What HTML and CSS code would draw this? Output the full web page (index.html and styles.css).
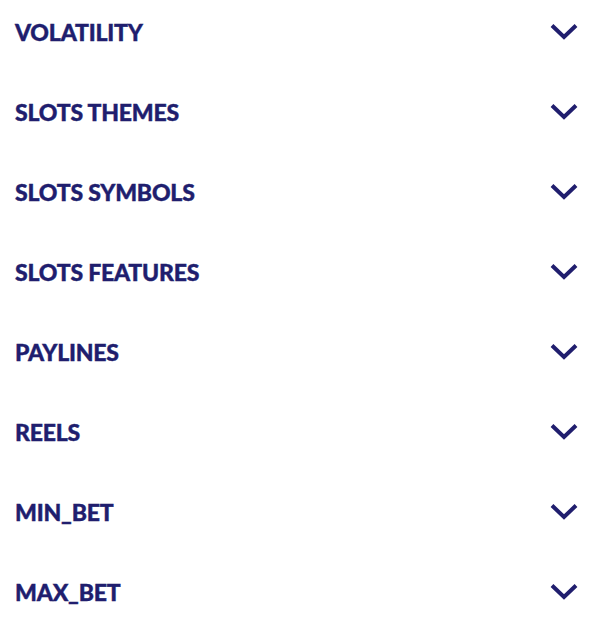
FILE: index.html
```html
<!DOCTYPE html>
<html lang="en">
<head>
<meta charset="utf-8">
<title>Filters</title>
<link rel="stylesheet" href="styles.css">
</head>
<body>
<ul class="filters">
  <li class="filter"><span class="filter-title">VOLATILITY</span><svg class="chevron" viewBox="0 0 28 18"><path d="M2 2.5 L14 14 L26 2.5"/></svg></li>
  <li class="filter"><span class="filter-title">SLOTS THEMES</span><svg class="chevron" viewBox="0 0 28 18"><path d="M2 2.5 L14 14 L26 2.5"/></svg></li>
  <li class="filter"><span class="filter-title">SLOTS SYMBOLS</span><svg class="chevron" viewBox="0 0 28 18"><path d="M2 2.5 L14 14 L26 2.5"/></svg></li>
  <li class="filter"><span class="filter-title">SLOTS FEATURES</span><svg class="chevron" viewBox="0 0 28 18"><path d="M2 2.5 L14 14 L26 2.5"/></svg></li>
  <li class="filter"><span class="filter-title">PAYLINES</span><svg class="chevron" viewBox="0 0 28 18"><path d="M2 2.5 L14 14 L26 2.5"/></svg></li>
  <li class="filter"><span class="filter-title">REELS</span><svg class="chevron" viewBox="0 0 28 18"><path d="M2 2.5 L14 14 L26 2.5"/></svg></li>
  <li class="filter"><span class="filter-title">MIN_BET</span><svg class="chevron" viewBox="0 0 28 18"><path d="M2 2.5 L14 14 L26 2.5"/></svg></li>
  <li class="filter"><span class="filter-title">MAX_BET</span><svg class="chevron" viewBox="0 0 28 18"><path d="M2 2.5 L14 14 L26 2.5"/></svg></li>
</ul>
</body>
</html>
```
FILE: styles.css
```css
html, body {
  margin: 0;
  padding: 0;
  background: #ffffff;
}

body {
  font-family: Lato, "Open Sans", "Liberation Sans", sans-serif;
  color: #201e6e;
}

.filters {
  list-style: none;
  margin: 0;
  padding: 0;
}

.filter {
  display: flex;
  align-items: center;
  justify-content: space-between;
  height: 80px;
  padding: 0 24px 0 15px;
  margin-top: -8px;
  margin-bottom: 8px;
}

.filter-title {
  font-size: 23px;
  font-weight: 900;
  line-height: 24px;
  letter-spacing: -0.2px;
  -webkit-text-stroke: 0.4px #201e6e;
}

.chevron {
  width: 28px;
  height: 18px;
  fill: none;
  stroke: #201e6e;
  stroke-width: 4;
  stroke-linecap: butt;
  stroke-linejoin: miter;
}
```
